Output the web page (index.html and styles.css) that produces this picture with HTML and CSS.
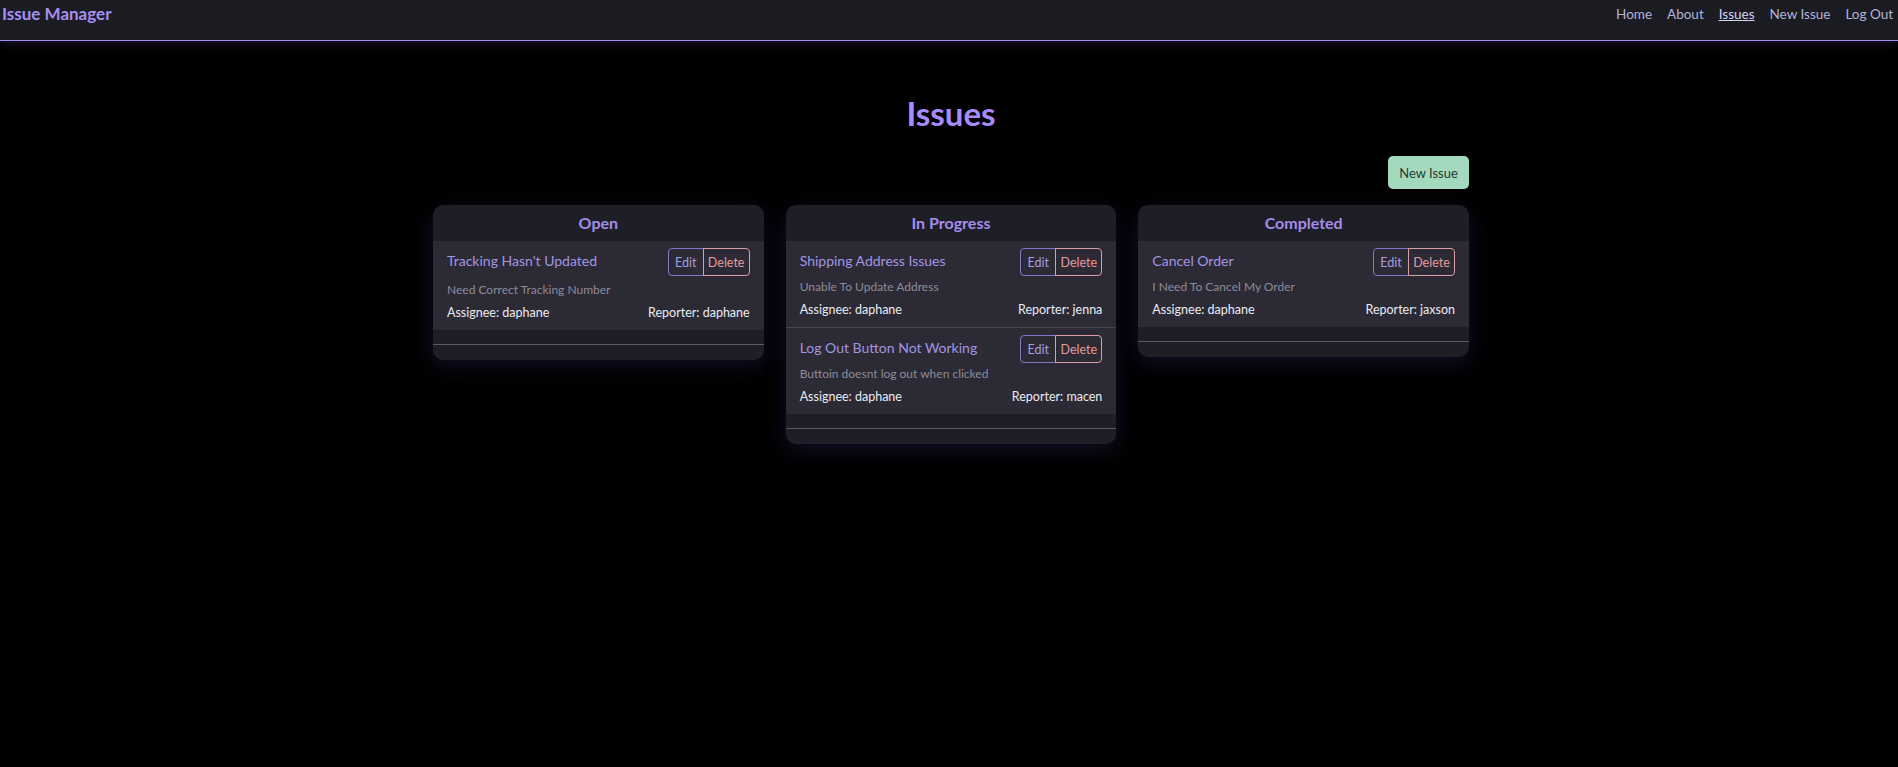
FILE: index.html
```html
<!DOCTYPE html>
<html lang="en">
<head>
<meta charset="utf-8">
<title>Issue Manager</title>
<link rel="stylesheet" href="styles.css">
</head>
<body>
<header class="topbar">
  <a class="brand" href="#">Issue Manager</a>
  <nav class="nav">
    <a href="#">Home</a>
    <a href="#">About</a>
    <a href="#" class="active">Issues</a>
    <a href="#">New Issue</a>
    <a href="#">Log Out</a>
  </nav>
</header>
<main class="page">
  <h1 class="page-title">Issues</h1>
  <div class="toolbar"><button class="btn-new">New Issue</button></div>
  <div class="board">
    <section class="column">
      <h2 class="column-head">Open</h2>
      <div class="issue">
        <div class="issue-top">
          <span class="issue-title">Tracking Hasn't Updated</span>
          <div class="actions"><button class="btn-edit">Edit</button><button class="btn-del">Delete</button></div>
        </div>
        <p class="issue-desc issue-desc-spaced">Need Correct Tracking Number</p>
        <div class="issue-meta"><span>Assignee: daphane</span><span>Reporter: daphane</span></div>
      </div>
      <div class="column-foot"></div>
    </section>
    <section class="column">
      <h2 class="column-head">In Progress</h2>
      <div class="issue">
        <div class="issue-top">
          <span class="issue-title">Shipping Address Issues</span>
          <div class="actions"><button class="btn-edit">Edit</button><button class="btn-del">Delete</button></div>
        </div>
        <p class="issue-desc">Unable To Update Address</p>
        <div class="issue-meta"><span>Assignee: daphane</span><span>Reporter: jenna</span></div>
      </div>
      <div class="issue">
        <div class="issue-top">
          <span class="issue-title">Log Out Button Not Working</span>
          <div class="actions"><button class="btn-edit">Edit</button><button class="btn-del">Delete</button></div>
        </div>
        <p class="issue-desc">Buttoin doesnt log out when clicked</p>
        <div class="issue-meta"><span>Assignee: daphane</span><span>Reporter: macen</span></div>
      </div>
      <div class="column-foot"></div>
    </section>
    <section class="column">
      <h2 class="column-head">Completed</h2>
      <div class="issue">
        <div class="issue-top">
          <span class="issue-title">Cancel Order</span>
          <div class="actions"><button class="btn-edit">Edit</button><button class="btn-del">Delete</button></div>
        </div>
        <p class="issue-desc">I Need To Cancel My Order</p>
        <div class="issue-meta"><span>Assignee: daphane</span><span>Reporter: jaxson</span></div>
      </div>
      <div class="column-foot"></div>
    </section>
  </div>
</main>
</body>
</html>
```
FILE: styles.css
```css
* { box-sizing: border-box; }
html, body { margin: 0; padding: 0; }
body {
  background: #000;
  font-family: Lato, "Noto Sans", sans-serif;
  color: #e8e8ee;
  min-height: 767px;
}
.topbar {
  height: 41px;
  background: #1b1b22;
  border-bottom: 1px solid #a48df0;
  box-shadow: 0 2px 10px rgba(110, 80, 200, 0.25);
  display: flex;
  justify-content: space-between;
  align-items: flex-start;
  padding: 4px 5px 0 2px;
}
.brand {
  color: #a58ff0;
  font-weight: 700;
  font-size: 17px;
  text-decoration: none;
  line-height: 20px;
}
.nav {
  display: flex;
  gap: 15px;
}
.nav a {
  color: #b3b3d6;
  font-size: 13.5px;
  line-height: 20px;
  text-decoration: none;
}
.nav a.active {
  color: #d6d3f3;
  text-decoration: underline;
}
.page {
  width: 1036px;
  margin-left: calc(50% - 516px);
}
.page-title {
  margin: 52px 0 0;
  text-align: center;
  font-size: 33px;
  line-height: 40px;
  font-weight: 700;
  color: #a78bfa;
}
.toolbar {
  display: flex;
  justify-content: flex-end;
  margin-top: 23px;
}
.btn-new {
  height: 33px;
  width: 81px;
  border: none;
  border-radius: 5px;
  background: #a3d9bd;
  color: #2b3a33;
  font-family: inherit;
  font-size: 13px;
  padding: 0;
}
.board {
  display: grid;
  grid-template-columns: repeat(3, 1fr);
  gap: 22px;
  margin-top: 16px;
  align-items: start;
}
.column {
  background: #1e1e26;
  border-radius: 10px;
  overflow: hidden;
  box-shadow: 0 6px 22px rgba(100, 70, 190, 0.2);
}
.column-head {
  margin: 0;
  height: 36px;
  line-height: 36px;
  text-align: center;
  font-size: 16px;
  font-weight: 700;
  color: #a48ceb;
}
.issue {
  background: #2b2a35;
  padding: 7px 14px 8px;
}
.issue + .issue { border-top: 1px solid #45444f; }
.issue-top {
  display: flex;
  justify-content: space-between;
  align-items: center;
  height: 28px;
}
.issue-title {
  color: #a395e4;
  font-size: 14px;
  padding-bottom: 3px;
}
.actions { display: flex; }
.actions button {
  height: 28px;
  background: transparent;
  font-family: inherit;
  font-size: 12.5px;
  padding: 0;
}
.btn-edit {
  width: 36px;
  border: 1px solid #8a74c9;
  border-radius: 4px 0 0 4px;
  color: #a99ee0;
}
.btn-del {
  width: 47px;
  border: 1px solid #d9a0a6;
  border-radius: 0 4px 4px 0;
  margin-left: -1px;
  color: #e69c9c;
}
.issue-desc {
  margin: 2px 0 0;
  font-size: 12px;
  line-height: 18px;
  color: #8e8c9a;
}
.issue-desc-spaced { margin-top: 5px; }
.issue-meta {
  display: flex;
  justify-content: space-between;
  margin-top: 5px;
  font-size: 12.5px;
  line-height: 18px;
  color: #ececf2;
}
.column-foot {
  margin-top: 14px;
  height: 16px;
  border-top: 1px solid #5a5963;
}
```
